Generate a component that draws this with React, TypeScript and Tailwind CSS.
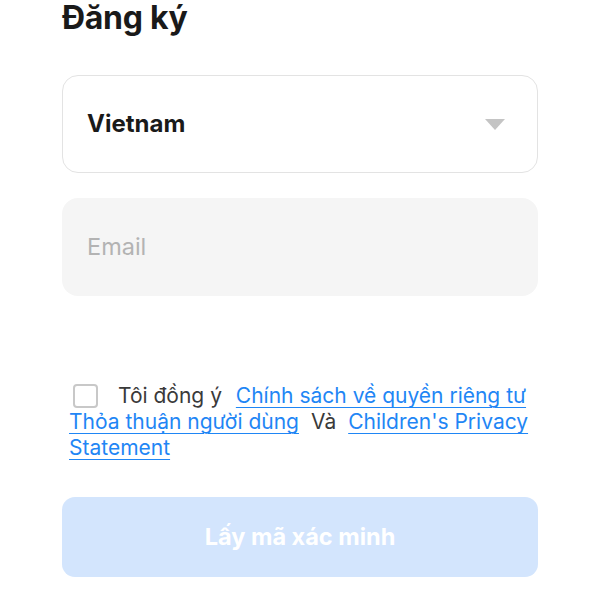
import React from "react";

export default function App() {
  return (
    <div className="w-[600px] h-[600px] bg-white overflow-hidden" style={{ fontFamily: "Inter, 'Noto Sans', sans-serif" }}>
      <div className="px-[62px]">
        <h1 className="text-[32px] leading-[40px] font-bold text-[#1a1a1a] tracking-[-0.3px] -mt-[2px]">Đăng ký</h1>
        <div className="mt-[37px] h-[98px] rounded-[16px] border border-[#e3e3e3] flex items-center justify-between pl-[24px] pr-[32px]">
          <span className="text-[24px] font-bold text-[#1a1a1a]">Vietnam</span>
          <svg width="20" height="11" viewBox="0 0 20 11">
            <path d="M0 0 L20 0 L10 11 Z" fill="#c4c4c4" />
          </svg>
        </div>
        <div className="mt-[25px] h-[98px] rounded-[16px] bg-[#f5f5f5] flex items-center pl-[25px]">
          <span className="text-[23.5px] text-[#b3b3b3]">Email</span>
        </div>
        <div className="mt-[87px] pl-[7px] text-[21px] leading-[26px] text-[#3a3a3a]">
          <span className="inline-block align-[-5px] w-[25px] h-[24px] border-2 border-[#c8c8c8] rounded-[4px] ml-[4px] mr-[20px]"></span>
          Tôi đồng ý{"  "}
          <a className="text-[#1f86f5] underline underline-offset-[4px] decoration-1 ml-[8px]">Chính sách về quyền riêng tư</a>
          <br />
          <a className="text-[#1f86f5] underline underline-offset-[4px] decoration-1">Thỏa thuận người dùng</a>
          <span className="mx-[12px]">Và</span>
          <a className="text-[#1f86f5] underline underline-offset-[4px] decoration-1">
            Children's Privacy
            <br />
            Statement
          </a>
        </div>
        <div className="mt-[36px] h-[80px] rounded-[13px] bg-[#d3e5fd] flex items-center justify-center">
          <span className="text-[23.5px] font-bold text-white">Lấy mã xác minh</span>
        </div>
      </div>
    </div>
  );
}
